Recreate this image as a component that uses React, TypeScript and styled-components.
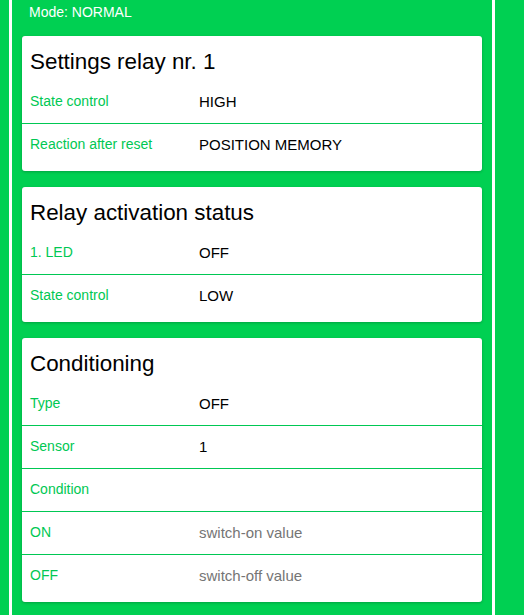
import React from "react";
import styled, { createGlobalStyle } from "styled-components";

const GlobalStyle = createGlobalStyle`
  html, body {
    margin: 0;
    padding: 0;
    background: #00d052;
    font-family: "Liberation Sans", Arial, sans-serif;
  }
`;

const Page = styled.div`
  box-sizing: border-box;
  margin-left: 9px;
  width: 486px;
  min-height: 100vh;
  border-left: 3px solid #ffffff;
  border-right: 3px solid #ffffff;
  padding: 4px 10px 16px;
  display: flex;
  flex-direction: column;
  gap: 16px;
`;

const Mode = styled.div`
  color: #ffffff;
  font-size: 14px;
  line-height: 16px;
  padding: 0 7px;
`;

const Card = styled.section`
  background: #ffffff;
  border-radius: 3px;
  box-shadow: 0 1px 3px rgba(0, 0, 0, 0.22);
  padding: 13px 0 5px;
`;

const Title = styled.h2`
  margin: 0 0 6px;
  padding: 0 8px;
  font-size: 22.4px;
  font-weight: 400;
  line-height: 26px;
  color: #000000;
`;

const Row = styled.div`
  box-sizing: border-box;
  display: grid;
  grid-template-columns: 169px 1fr;
  align-items: center;
  height: 43px;
  padding: 0 8px 2px;
  border-bottom: 1px solid #00c853;
  &:last-child {
    border-bottom: none;
    height: 42px;
  }
`;

const Label = styled.span`
  color: #00c853;
  font-size: 14px;
`;

const Value = styled.span<{ $placeholder?: boolean }>`
  color: ${(p) => (p.$placeholder ? "#757575" : "#000000")};
  font-size: 15px;
`;

type Item = { label: string; value?: string; placeholder?: boolean };

const sections: { title: string; items: Item[] }[] = [
  {
    title: "Settings relay nr. 1",
    items: [
      { label: "State control", value: "HIGH" },
      { label: "Reaction after reset", value: "POSITION MEMORY" },
    ],
  },
  {
    title: "Relay activation status",
    items: [
      { label: "1. LED", value: "OFF" },
      { label: "State control", value: "LOW" },
    ],
  },
  {
    title: "Conditioning",
    items: [
      { label: "Type", value: "OFF" },
      { label: "Sensor", value: "1" },
      { label: "Condition", value: "" },
      { label: "ON", value: "switch-on value", placeholder: true },
      { label: "OFF", value: "switch-off value", placeholder: true },
    ],
  },
];

export default function App() {
  return (
    <>
      <GlobalStyle />
      <Page>
        <Mode>Mode: NORMAL</Mode>
        {sections.map((s) => (
          <Card key={s.title}>
            <Title>{s.title}</Title>
            {s.items.map((it, i) => (
              <Row key={i}>
                <Label>{it.label}</Label>
                <Value $placeholder={it.placeholder}>{it.value}</Value>
              </Row>
            ))}
          </Card>
        ))}
      </Page>
    </>
  );
}
